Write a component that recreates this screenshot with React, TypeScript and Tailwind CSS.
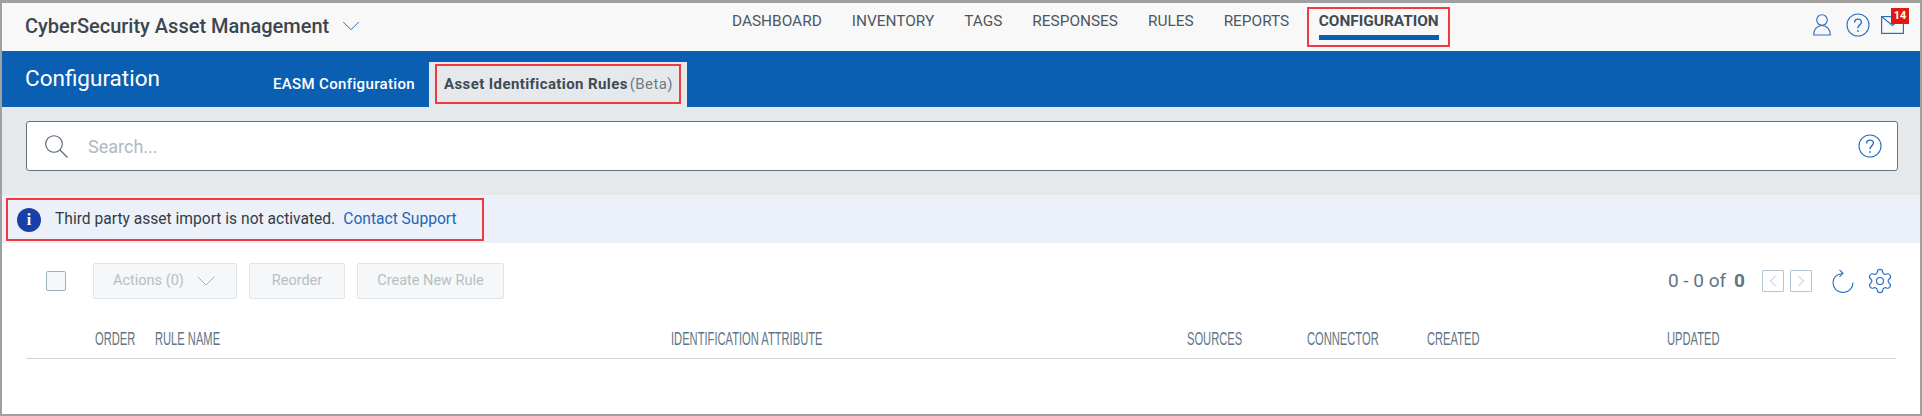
import React from "react";
import { Settings, ChevronDown, ChevronLeft, ChevronRight } from "lucide-react";

const roboto = "[font-family:Roboto,'Liberation_Sans',sans-serif]";

function Help({ size = 24 }: { size?: number }) {
  return (
    <svg width={size} height={size} viewBox="0 0 24 24" fill="none" stroke="#2a6fc0" strokeWidth="1.1">
      <circle cx="12" cy="12" r="11" />
      <path d="M8.6 9.4c0-2 1.5-3.3 3.4-3.3s3.4 1.3 3.4 3.1c0 2.6-3.4 2.7-3.4 5.4v.6" strokeWidth="1.4" />
      <circle cx="12" cy="18" r="0.9" fill="#2a6fc0" stroke="none" />
    </svg>
  );
}

const navItems = ["DASHBOARD", "INVENTORY", "TAGS", "RESPONSES", "RULES", "REPORTS"];

const cols = ["ORDER", "RULE NAME", "IDENTIFICATION ATTRIBUTE", "SOURCES", "CONNECTOR", "CREATED", "UPDATED"];

export default function App() {
  return (
    <div className={`w-[1922px] h-[416px] flex flex-col bg-white border-x-2 border-b-2 border-t-[3px] border-[#a0a0a0] overflow-hidden ${roboto}`}>
      <header className="h-[48px] shrink-0 bg-[#f8f8f8] flex items-start relative">
        <div className="flex items-center pl-[23px] h-[48px] pb-[3px] w-[730px] gap-[7px]">
          <span className="text-[20px] font-medium text-[#3c4650] whitespace-nowrap">CyberSecurity Asset Management</span>
          <ChevronDown size={30} strokeWidth={0.8} color="#2a6fc0" />
        </div>
        <nav className="flex items-start gap-[30px]">
          {navItems.map((t) => (
            <span key={t} className="mt-[8px] text-[15.400px] leading-[20px] text-[#4c5762] whitespace-nowrap">{t}</span>
          ))}
          <div className="ml-[-12px] mt-[4px] w-[143px] h-[40px] border-2 border-[#ee3b42] flex flex-col items-center pt-[2px]">
            <span className="text-[15.400px] leading-[20px] font-bold text-[#3f4a55] whitespace-nowrap">CONFIGURATION</span>
            <div className="w-[120px] h-[5px] bg-[#0b5fb3] mt-[4px]" />
          </div>
        </nav>
        <div className="ml-auto flex items-start pr-[16px]">
          <svg width="18" height="22" viewBox="0 0 18 22" fill="none" stroke="#2a6fc0" strokeWidth="1.1" className="mt-[11px]">
            <circle cx="9" cy="6" r="5.300" />
            <path d="M0.600 21c0-5.500 3.500-9.500 8.400-9.500s8.400 4 8.400 9.500z" />
          </svg>
          <div className="ml-[15px] mt-[10px]"><Help size={24} /></div>
          <div className="relative ml-[11px] mt-[13px] w-[23px] h-[18px]">
            <svg width="23" height="18" viewBox="0 0 23 18" fill="none" stroke="#2a6fc0" strokeWidth="1.2">
              <rect x="0.600" y="0.600" width="21.800" height="16.800" />
              <path d="M0.600 0.600 11.500 9.500 22.400 0.600" />
            </svg>
            <span className="absolute left-[10px] top-[-8px] w-[18px] h-[16px] bg-[#e2190f] text-white text-[11px] leading-[16px] font-bold text-center">14</span>
          </div>
        </div>
      </header>

      <div className="h-[56px] shrink-0 bg-[#0b5fb3] flex items-start">
        <div className="w-[271px] pl-[23px] pt-[11px] text-[22.500px] leading-[32px] text-white">Configuration</div>
        <div className="w-[156px] pt-[23px] text-[15px] tracking-[0.35px] leading-[20px] font-medium text-white whitespace-nowrap">EASM Configuration</div>
        <div className="mt-[11px] w-[258px] h-[45px] bg-[#e5e9ec] px-[6px] pt-[2px]">
          <div className="h-[40px] border-2 border-[#ee3b42] flex items-center pl-[7px] whitespace-nowrap">
            <span className="text-[15px] tracking-[0.4px] font-bold text-[#3f4a55]">Asset Identification Rules</span>
            <span className="text-[15px] tracking-[0.4px] text-[#6d7c88] ml-[2px]">(Beta)</span>
          </div>
        </div>
      </div>

      <div className="h-[88px] shrink-0 bg-[#e5e9ec] pl-[24px] pr-[22px] pt-[14px]">
        <div className="h-[50px] bg-white border border-[#5f7585] rounded-[3px] flex items-center pl-[18px] pr-[15px]">
          <svg width="23" height="23" viewBox="0 0 23 23" fill="none" stroke="#4c6172" strokeWidth="1.1">
            <circle cx="9" cy="9" r="8.300" />
            <path d="M15 15 22.500 22.500" />
          </svg>
          <span className="ml-[20px] text-[18px] text-[#adbac2] flex-1">Search...</span>
          <Help size={24} />
        </div>
      </div>

      <div className="h-[48px] shrink-0 bg-[#ecf1f9] pl-[4px] pt-[3px]">
        <div className="w-[478px] h-[43px] border-2 border-[#ee3b42] flex items-center pl-[9px] whitespace-nowrap">
          <span className="w-[24px] h-[24px] rounded-full bg-[#1a3fa8] text-white flex items-center justify-center text-[16px] font-bold [font-family:'Liberation_Serif',serif]">i</span>
          <span className="ml-[14px] text-[15.600px] text-[#333c45]">Third party asset import is not activated.</span>
          <span className="ml-[8px] text-[15.600px] text-[#1f66b5]">Contact Support</span>
        </div>
      </div>

      <div className="flex-1 bg-white">
        <div className="h-[56px] mt-[10px] flex items-center pl-[44px] pr-[26px]">
          <div className="w-[20px] h-[20px] rounded-[2px] border border-[#9fb0bb] bg-[#f5f7f9]" />
          <div className="ml-[27px] w-[144px] h-[36px] bg-[#f5f7f9] border border-[#dfe5e9] rounded-[2px] flex items-center pl-[19px] gap-[6px] text-[14.500px] text-[#b4bfc6]">
            <span>Actions (0)</span>
            <ChevronDown size={32} strokeWidth={0.75} color="#a5b1b9" />
          </div>
          <div className="ml-[12px] w-[96px] h-[36px] bg-[#f5f7f9] border border-[#dfe5e9] rounded-[2px] flex items-center justify-center text-[14.500px] text-[#b4bfc6]">Reorder</div>
          <div className="ml-[12px] w-[147px] h-[36px] bg-[#f5f7f9] border border-[#dfe5e9] rounded-[2px] flex items-center justify-center text-[14.500px] text-[#b4bfc6]">Create New Rule</div>
          <div className="ml-auto flex items-center">
            <span className="text-[19px] text-[#5f7585]">0 - 0 of</span>
            <span className="ml-[8px] text-[19px] font-bold text-[#5f7585]">0</span>
            <span className="ml-[17px] w-[22px] h-[22px] border border-[#b5c5d0] rounded-[1px] flex items-center justify-center"><ChevronLeft size={22} strokeWidth={1} color="#a5b5c0" /></span>
            <span className="ml-[6px] w-[22px] h-[22px] border border-[#b5c5d0] rounded-[1px] flex items-center justify-center"><ChevronRight size={22} strokeWidth={1} color="#a5b5c0" /></span>
            <svg width="22" height="24" viewBox="0 0 22 24" fill="none" stroke="#2a6fc0" strokeWidth="1.1" className="ml-[20px]">
              <path d="M10 4.500C4.500 5.500 1 8.500 1 13.500a10 10 0 0 0 20 0" />
              <path d="M7.500 0.800 11 4.300 7.500 7.800" />
            </svg>
            <Settings size={28} strokeWidth={1} color="#2a6fc0" className="ml-[12px]" />
          </div>
        </div>
        <div className="mx-[24px] mt-[21px] h-[29px] border-b border-[#cfd6dc] pl-[69px] grid grid-cols-[60px_516px_516px_120px_120px_240px_1fr] items-start text-[18px] leading-[18px] text-[#5f7585]">
          {cols.map((c) => (
            <span key={c} className="inline-block whitespace-nowrap origin-left scale-x-[0.62] [font-family:'Liberation_Sans',sans-serif]">{c}</span>
          ))}
        </div>
      </div>
    </div>
  );
}
